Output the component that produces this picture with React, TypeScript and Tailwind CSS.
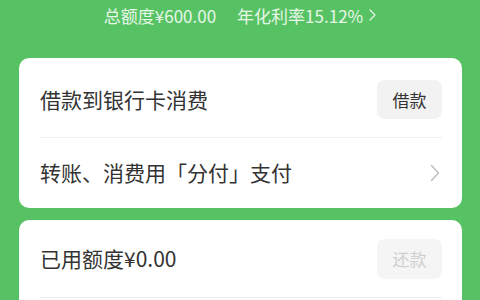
export default function App() {
  const font = { fontFamily: '"Noto Sans CJK SC", "Noto Sans", sans-serif' };
  return (
    <div className="h-[300px] w-[480px] overflow-hidden bg-[#57c263]" style={font}>
      <div className="flex h-[30px] items-center justify-center gap-[21px] text-[17px] leading-none text-white/85">
        <span>总额度¥600.00</span>
        <span className="flex items-center gap-[6px]">
          年化利率15.12%
          <svg width="7" height="12" viewBox="0 0 7 12" fill="none">
            <path d="M1 1l5 5-5 5" stroke="currentColor" strokeWidth="1.2" strokeLinecap="round" strokeLinejoin="round" />
          </svg>
        </span>
      </div>

      <div className="ml-[19px] mt-[28px] w-[443px] rounded-[10px] bg-white px-[21px] pr-[20px]">
        <div className="flex h-[80px] items-center justify-between border-b border-[#f0f0f0] pt-[4px]">
          <span className="text-[21px] text-[#333]">借款到银行卡消费</span>
          <button className="flex h-[39px] w-[65px] items-center justify-center rounded-[8px] bg-[#f2f2f2] text-[17px] text-[#333]">
            借款
          </button>
        </div>
        <div className="flex h-[70px] items-center justify-between">
          <span className="text-[21px] text-[#333]">转账、消费用「分付」支付</span>
          <svg width="10" height="18" viewBox="0 0 10 18" fill="none" className="mr-[2px]">
            <path d="M1.5 1.5l7 7.5-7 7.5" stroke="#bdbdbd" strokeWidth="1.4" strokeLinecap="round" strokeLinejoin="round" />
          </svg>
        </div>
      </div>

      <div className="ml-[19px] mt-[12px] w-[443px] rounded-[10px] bg-white px-[21px] pr-[20px]">
        <div className="flex h-[78px] items-center justify-between border-b border-[#f0f0f0]">
          <span className="text-[21px] text-[#333]">已用额度¥0.00</span>
          <button className="flex h-[40px] w-[65px] items-center justify-center rounded-[8px] bg-[#f5f5f5] text-[17px] text-[#cfcfcf]">
            还款
          </button>
        </div>
        <div className="h-[40px]" />
      </div>
    </div>
  );
}
